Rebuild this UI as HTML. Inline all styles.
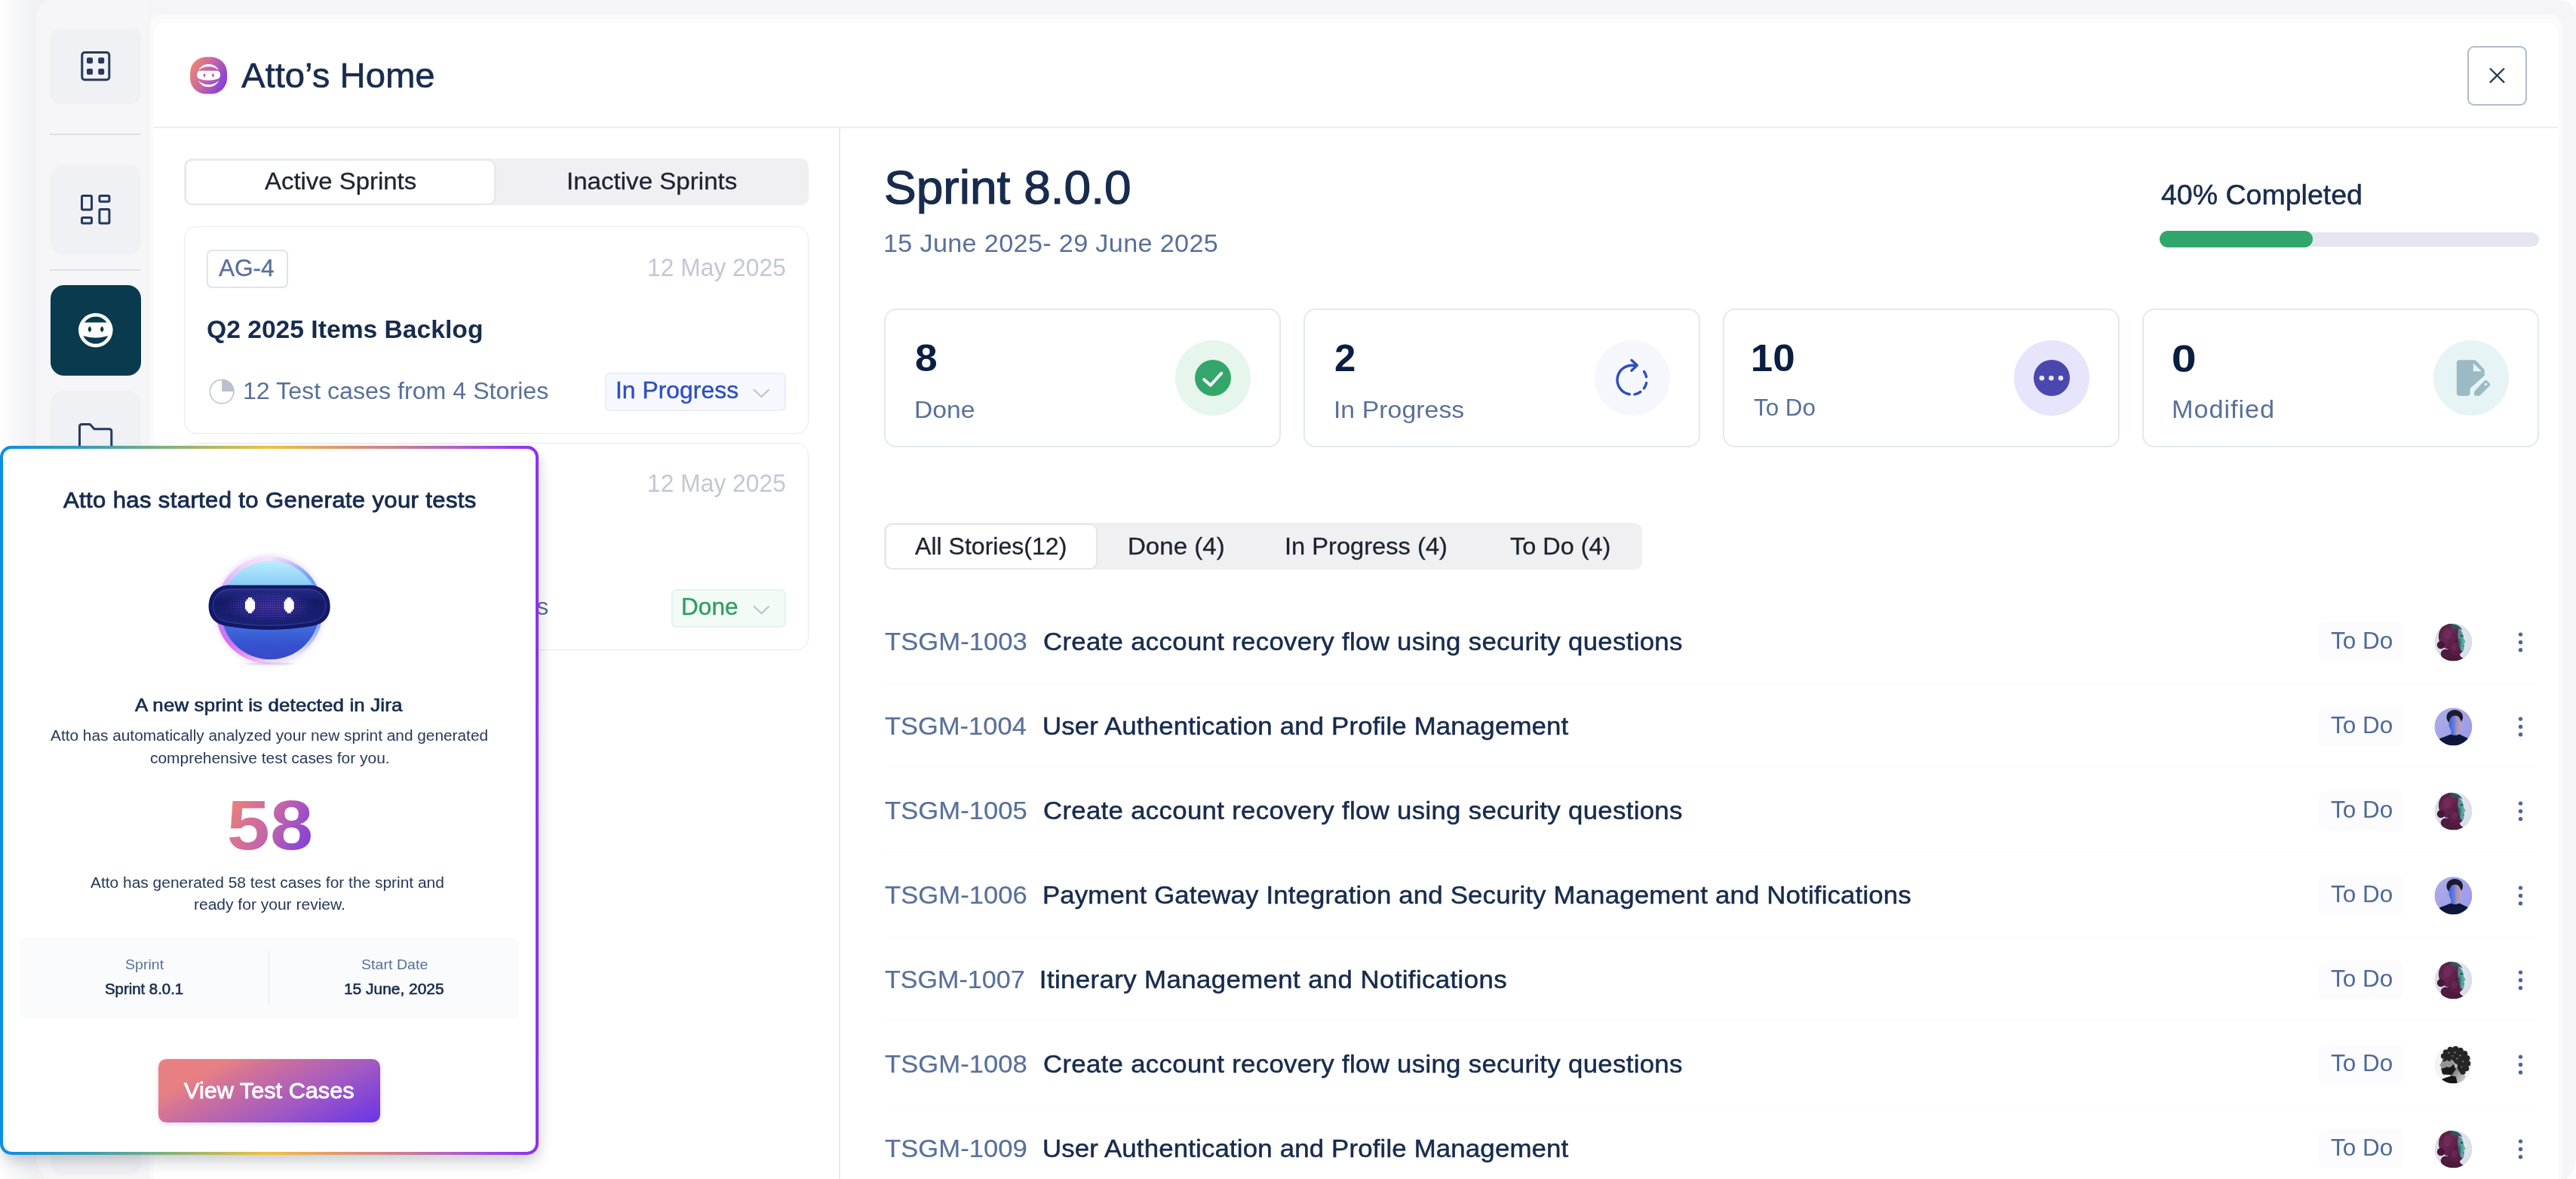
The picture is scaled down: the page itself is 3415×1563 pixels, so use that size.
<!DOCTYPE html>
<html lang="en">
<head>
<meta charset="utf-8">
<title>Atto's Home</title>
<style>
*{box-sizing:border-box;margin:0;padding:0}
html,body{width:3415px;height:1563px;overflow:hidden}
body{position:relative;background:#fcfcfd;font-family:"Liberation Sans",sans-serif}
.abs,.t,.box{position:absolute}
.t{white-space:pre;line-height:1;font-weight:normal}
#leftfade{left:0;top:0;width:70px;height:1563px;background:linear-gradient(to right,#ffffff 0px,#fafafc 14px,#f4f5f7 30px,#f0f1f4 48px,#f1f2f5 70px)}
#shell{left:48px;top:0;width:3367px;height:1574px;background:#f5f5f7;border-radius:22px 22px 40px 40px}
#sidebar{left:48px;top:0;width:150px;height:1574px;background:#f6f6f8;border-radius:22px 0 0 40px}
.sb{left:67px;width:120px;background:#f0f1f4;border-radius:18px}
.sep{left:66px;width:121px;height:2px;background:#dfe1e7}
#mainOuter{left:198px;top:19px;width:3198px;height:1600px;background:#fbfbfc;border-radius:16px}
#main{left:204px;top:30px;width:3186.5px;height:1600px;background:#fff;border-radius:13px}
#hdrline{left:204px;top:167.5px;width:3186.5px;height:2px;background:#eceef1}
#vline{left:1112px;top:169px;width:2px;height:1400px;background:#e7e9ef}
.card{border:2px solid #e4e8ef;border-radius:16px;background:#fff}
.tabs{background:#f0f0f3;border-radius:10px}
.tabon{background:#fff;border:2px solid #e5e6eb;border-radius:10px}
.badge{border-radius:7px}
.circ{border-radius:50%}
.rowsep{left:1173px;width:2188px;height:1.5px;background:#fbfbfd}
.todo{left:3074px;width:113px;height:52px;background:#fcfcfe;border-radius:8px}
#popup{left:0;top:591px;width:713.5px;height:940px;border-radius:15px;background:linear-gradient(to right,#0a8fe2 0%,#3f9fb0 18%,#8db474 33%,#f0c23f 50%,#e39a6b 62%,#cf7f92 74%,#a855d6 88%,#8b2ff5 100%);box-shadow:0 12px 22px -4px rgba(15,20,40,.19),5px 6px 14px rgba(15,20,40,.05)}
#popin{left:3.8px;top:3.8px;width:705.9px;height:932.4px;border-radius:11.5px;background:#fff}
#info{left:26px;top:1242.5px;width:662px;height:107.5px;background:#fafbfc;border-radius:6px}
#infodiv{left:355.5px;top:1261px;width:1.5px;height:72px;background:#e3e6ec}
#btn{left:210px;top:1404px;width:294px;height:84px;border-radius:10.5px;background:linear-gradient(152deg,#e98082 0%,#e78083 21%,#cf719a 35%,#b865b0 50%,#a259c2 65%,#8547d6 82%,#6a34e6 100%);box-shadow:0 2px 6px rgba(80,40,140,.2)}
</style>
</head>
<body>
<div class="abs" id="leftfade"></div>
<div class="abs" id="shell"></div>
<div class="abs" id="sidebar"></div>
<!-- sidebar buttons -->
<div class="abs sb" style="top:38px;height:100px;border-radius:14px"></div>
<div class="abs sep" style="top:176.5px"></div>
<div class="abs sb" style="top:218px;height:120px"></div>
<div class="abs sep" style="top:357px"></div>
<div class="abs sb" style="top:378px;height:120px;background:#0a3a4d"></div>
<div class="abs sb" style="top:518px;height:120px"></div>
<div class="abs sb" style="top:1438px;height:120px"></div>

<div class="abs" id="mainOuter"></div>
<div class="abs" id="main"></div>
<div class="abs" id="hdrline"></div>
<div class="abs" id="vline"></div>

<!-- close button -->
<div class="abs" style="left:3271px;top:60.5px;width:79px;height:79px;border:2.5px solid #b4bac8;border-radius:9px;background:#fff"></div>

<!-- left tabs -->
<div class="abs tabs" style="left:244px;top:210px;width:828px;height:62px"></div>
<div class="abs tabon" style="left:244.5px;top:210.5px;width:412px;height:61px"></div>

<!-- sprint cards -->
<div class="abs card" style="left:244px;top:300px;width:828px;height:275px;border:1.6px solid #e6e9ef"></div>
<div class="abs card" style="left:244px;top:587px;width:828px;height:275px;border:1.6px solid #e6e9ef"></div>
<div class="abs badge" style="left:274px;top:330.5px;width:108px;height:51px;border:2px solid #dfe3ec"></div>
<div class="abs badge" style="left:802px;top:493.5px;width:239.5px;height:51px;background:#f6f8fe;border:2.2px solid #e9edfb"></div>
<div class="abs badge" style="left:889.5px;top:781px;width:152px;height:51px;background:#f3fbf6;border:2.2px solid #e3f5ea"></div>

<!-- progress -->
<div class="abs" style="left:2862.5px;top:307.5px;width:503px;height:19.5px;border-radius:10px;background:#e3e6ef"></div>
<div class="abs" style="left:2862.5px;top:306.3px;width:203px;height:21.4px;border-radius:11px;background:#30a66b"></div>

<!-- stat cards -->
<div class="abs card" style="left:1172px;top:409px;width:526px;height:184px"></div>
<div class="abs card" style="left:1728px;top:409px;width:526px;height:184px"></div>
<div class="abs card" style="left:2284px;top:409px;width:525.5px;height:184px"></div>
<div class="abs card" style="left:2839.5px;top:409px;width:526px;height:184px"></div>
<div class="abs circ" style="left:1558px;top:451px;width:100px;height:100px;background:#e6f6ec"></div>
<div class="abs circ" style="left:1584px;top:477px;width:48px;height:48px;background:#34a66c"></div>
<div class="abs circ" style="left:2113.8px;top:451px;width:100px;height:100px;background:#f5f7fd"></div>
<div class="abs circ" style="left:2669.5px;top:451px;width:100px;height:100px;background:#e6e5fb"></div>
<div class="abs circ" style="left:2695.5px;top:477px;width:48px;height:48px;background:#4a48ae"></div>
<div class="abs circ" style="left:3225.5px;top:451px;width:100px;height:100px;background:#e6f4f6"></div>

<!-- story tabs -->
<div class="abs tabs" style="left:1172px;top:693px;width:1004.5px;height:62px"></div>
<div class="abs tabon" style="left:1172.5px;top:693.5px;width:282.5px;height:61px"></div>

<!-- rows -->
<div class="abs rowsep" style="top:904.7px"></div>
<div class="abs rowsep" style="top:1016.7px"></div>
<div class="abs rowsep" style="top:1128.7px"></div>
<div class="abs rowsep" style="top:1240.7px"></div>
<div class="abs rowsep" style="top:1352.7px"></div>
<div class="abs rowsep" style="top:1464.7px"></div>
<div class="abs todo" style="top:824.8px"></div>
<div class="abs todo" style="top:936.8px"></div>
<div class="abs todo" style="top:1048.8px"></div>
<div class="abs todo" style="top:1160.8px"></div>
<div class="abs todo" style="top:1272.8px"></div>
<div class="abs todo" style="top:1384.8px"></div>
<div class="abs todo" style="top:1496.8px"></div>
<svg class="abs" style="left:0;top:0;overflow:visible" width="3415" height="1563" viewBox="0 0 3415 1563" fill="none">
<defs>
<clipPath id="avc"><circle cx="25" cy="25" r="25"/></clipPath>
<filter id="avb" x="-10%" y="-10%" width="120%" height="120%"><feGaussianBlur stdDeviation="0.7"/></filter><filter id="avb2" x="-10%" y="-10%" width="120%" height="120%"><feGaussianBlur stdDeviation="0.9"/></filter>
<radialGradient id="avAbg" cx="0.5" cy="0.45" r="0.6"><stop offset="0" stop-color="#eceef3"/><stop offset="1" stop-color="#d5d9e3"/></radialGradient>
<linearGradient id="avAh" x1="0" y1="0" x2="1" y2="1"><stop offset="0" stop-color="#4c1e3e"/><stop offset="0.45" stop-color="#6b2852"/><stop offset="1" stop-color="#3f1633"/></linearGradient>
<linearGradient id="avAf" x1="0" y1="0" x2="1" y2="0"><stop offset="0" stop-color="#54717f"/><stop offset="0.5" stop-color="#4fa39b"/><stop offset="1" stop-color="#69b9ad"/></linearGradient>
<linearGradient id="avBbg" x1="0" y1="0" x2="1" y2="1"><stop offset="0" stop-color="#b0aee6"/><stop offset="1" stop-color="#9596ec"/></linearGradient>
<linearGradient id="avBf" x1="0" y1="0" x2="1" y2="0"><stop offset="0" stop-color="#4166dd"/><stop offset="0.38" stop-color="#5b7be2"/><stop offset="0.62" stop-color="#a88fb8"/><stop offset="1" stop-color="#bfa5bd"/></linearGradient>
<linearGradient id="avCn" x1="0" y1="0" x2="1" y2="1"><stop offset="0" stop-color="#5a5a5a"/><stop offset="0.55" stop-color="#a9a9a9"/><stop offset="1" stop-color="#dcdcdc"/></linearGradient>
<g id="avA" clip-path="url(#avc)">
<rect width="50" height="50" fill="url(#avAbg)"/>
<g filter="url(#avb)">
<path d="M13,36 L33,30 L38,36.5 L33.2,41.5 L35,44.5 L38.5,46.5 L30,51 L10,50 Z" fill="#4a1a3b"/>
<ellipse cx="20" cy="17.5" rx="14.6" ry="17" fill="url(#avAh)"/>
<path d="M21,1 C28,0 34.5,3.5 37,9.5 C32.5,7 27,6 22.5,7.5 Z" fill="#2f525d"/>
<path d="M31.5,7.5 C35.5,9 37.6,12.5 38.3,16.5 L38.8,20 L41.3,24.6 L39.2,26.6 L39.8,29.5 L39,31 L39.3,34 L37.8,36.6 L33,36.8 C31,31 32,23 30.5,15 Z" fill="url(#avAf)"/>
<path d="M18,30 C24,30 30,26 31.5,21 C32.5,28 33.5,33 35.5,37.2 L30,44 L20,40 Z" fill="#591f47"/>
<circle cx="8.6" cy="28.7" r="5.2" fill="#47193a"/>
<circle cx="14.5" cy="40.5" r="6.2" fill="#4f1c3f"/>
<ellipse cx="17" cy="14" rx="5.5" ry="7.5" fill="#7d2e60" opacity="0.5"/>
<ellipse cx="26" cy="31" rx="4.5" ry="5.5" fill="#7d2e60" opacity="0.45"/>
<ellipse cx="36" cy="16.8" rx="1.9" ry="1.1" fill="#21434b"/>
<ellipse cx="33.4" cy="26" rx="1.8" ry="6" fill="#2c5a64" opacity="0.65"/>
<path d="M37,30.2 L39.6,30.6" stroke="#2c5a64" stroke-width="0.8"/>
</g>
</g>
<g id="avB" clip-path="url(#avc)">
<rect width="50" height="50" fill="url(#avBbg)"/>
<g filter="url(#avb)">
<ellipse cx="26.8" cy="12.5" rx="10.8" ry="9.8" fill="#1d1a30"/>
<rect x="22" y="28" width="10.5" height="10" fill="url(#avBf)"/>
<ellipse cx="27.3" cy="21.5" rx="8.3" ry="11.2" fill="url(#avBf)"/>
<path d="M17.8,14.5 C19,7.5 24,5.5 27.5,5.8 C32,6 36,9 36.2,15 C34.5,11.5 31,9.8 27,10 C23,10.2 19.5,11.5 17.8,14.5 Z" fill="#1d1a30"/>
<path d="M5,42 C10,39 17,37.5 21.5,35.2 C25,37 29.5,37 33,35 C37,37.5 42,39 46,41.5 L46,52 L5,52 Z" fill="#10193c"/>
</g>
</g>
<g id="avC" clip-path="url(#avc)">
<rect width="50" height="50" fill="#f3f3f4"/>
<g filter="url(#avb)">
<path d="M23,26 L33,30 L41.5,41 L37,47.5 L28,51 L21,40 Z" fill="url(#avCn)"/>
<path d="M12.5,15.5 L10.3,19.6 L6.7,26.2 L8.9,28 L8.3,30.6 L10.4,35.2 L22,37 L29,27 L22,17 Z" fill="#949494"/>
<path d="M11.2,18.2 L15,19.2 L14,21.2 L10.5,20.4 Z" fill="#2a2a2a"/>
<path d="M8.9,30.4 C11,30.2 13.5,29.8 16,28 C19,29.8 22.5,28.5 25,24.5 L28.5,31 L23,38.8 L11.5,38.3 L9.8,35.5 C10,34 9.8,32.5 8.9,30.4 Z" fill="#1e1e1e"/>
<path d="M9.2,44.8 C15,42.2 20,41.3 23,39.8 L28.5,41.2 L30.5,50.5 L14,50.5 Z" fill="#191919"/>
<g fill="#252525">
<path d="M11.5,16.5 C11,10 16,3.5 25,3 C35,2.5 43,9 44,19 C44.8,27 41,34 35.5,36.2 C32.5,35 30.5,31 29.2,27 C27.5,23.5 25.5,20.5 22.5,18.2 C19,16.5 15,16 11.5,16.5 Z"/>
<circle cx="12" cy="13.8" r="3.6"/><circle cx="15.2" cy="8.8" r="3.8"/><circle cx="21" cy="5.2" r="3.8"/><circle cx="28" cy="4.2" r="3.8"/><circle cx="34.5" cy="6.2" r="3.8"/>
<circle cx="40" cy="10.5" r="3.9"/><circle cx="43.2" cy="16.5" r="3.9"/><circle cx="44" cy="23.5" r="3.9"/><circle cx="42" cy="30" r="3.9"/><circle cx="37.5" cy="34.6" r="3.7"/>
<circle cx="15" cy="17.2" r="2.6"/><circle cx="19.5" cy="18.3" r="2.4"/>
</g>
<ellipse cx="28.6" cy="26.8" rx="1.9" ry="2.9" fill="#b8b8b8"/>
<g fill="#707070"><circle cx="19" cy="9.5" r="1.2"/><circle cx="27" cy="9" r="1.3"/><circle cx="34" cy="13" r="1.3"/><circle cx="38" cy="21" r="1.2"/><circle cx="30" cy="17" r="1.2"/><circle cx="24" cy="13.5" r="1.1"/><circle cx="36" cy="28" r="1.1"/></g>
</g>
</g>
</defs>
<use href="#avA" x="3227.4" y="826.3"/>
<use href="#avB" x="3227.4" y="938.3"/>
<use href="#avA" x="3227.4" y="1050.3"/>
<use href="#avB" x="3227.4" y="1162.3"/>
<use href="#avA" x="3227.4" y="1274.3"/>
<use href="#avC" x="3227.4" y="1386.3"/>
<use href="#avA" x="3227.4" y="1498.3"/>
</svg>

<svg class="abs" style="left:0;top:0;overflow:visible" width="3415" height="1563" viewBox="0 0 3415 1563" fill="none">
<defs>
<linearGradient id="lg1" x1="0" y1="0.25" x2="1" y2="0.75"><stop offset="0" stop-color="#ee8673"/><stop offset="0.45" stop-color="#c765a6"/><stop offset="1" stop-color="#7d3be2"/></linearGradient>
<g id="ninja">
<circle cx="0" cy="0" r="20.35" stroke="#fff" stroke-width="4.7"/>
<path d="M-22.5,-1.6 C-22.5,-7.5 -19,-10.3 -14,-10.3 L14,-10.3 C19,-10.3 22.6,-7.5 22.6,-1.6 C22.6,4.3 19.5,7.4 14.5,8 Q0,12.3 -14.5,8 C-19.5,7.4 -22.5,4.3 -22.5,-1.6 Z" fill="#fff"/>
</g>
</defs>
<!-- sidebar icon 1 -->
<rect x="108.8" y="69.5" width="36" height="36.3" rx="3.5" stroke="#263a5e" stroke-width="3"/>
<rect x="115" y="76.2" width="8" height="8" rx="2" fill="#263a5e"/><rect x="130.2" y="76.2" width="8" height="8" rx="2" fill="#263a5e"/>
<rect x="115" y="91" width="8" height="8" rx="2" fill="#263a5e"/><rect x="130.2" y="91" width="8" height="8" rx="2" fill="#263a5e"/>
<!-- sidebar icon 2 -->
<g stroke="#263a5e" stroke-width="3">
<rect x="108.5" y="259.5" width="13" height="18.4" rx="1.5"/>
<rect x="131.9" y="259.5" width="13" height="7.7" rx="1.5"/>
<rect x="108.5" y="288.4" width="13" height="7.5" rx="1.5"/>
<rect x="131.9" y="277.5" width="13" height="18.4" rx="1.5"/>
</g>
<!-- sidebar ninja -->
<g transform="translate(126.8,437.7)">
<use href="#ninja"/>
<path d="M-7.9,-5.1 Q-3.3,-1.15 -7.9,2.8 Q-12.5,-1.15 -7.9,-5.1 Z M8.4,-5.1 Q13,-1.15 8.4,2.8 Q3.8,-1.15 8.4,-5.1 Z" fill="#0a3a4d"/>
</g>
<!-- folder -->
<path d="M105.5,596 V565.5 Q105.5,562.5 108.5,562.5 H119.3 L125,568.7 H144.8 Q147.8,568.7 147.8,571.7 V596" stroke="#263a5e" stroke-width="3" stroke-linejoin="round"/>
<!-- header logo -->
<rect x="252" y="75.6" width="49" height="49" rx="21" fill="url(#lg1)"/>
<g>
<path d="M263.06,93.2 A15.2,15.2 0 0 1 289.94,93.2 A20.6,20.6 0 0 0 263.06,93.2 Z" fill="#fff"/>
<path d="M261.1,99.6 C261.1,95.4 263,93.7 266,93.7 H287.1 C290.1,93.7 292,95.4 292,99.6 C292,102.8 290.5,104.5 287.5,104.9 Q276.5,107.9 265.6,104.9 C262.6,104.5 261.1,102.8 261.1,99.6 Z" fill="#fff"/>
<path d="M262.7,106.4 A15.2,15.2 0 0 0 290.3,106.4 A19.3,19.3 0 0 1 262.7,106.4 Z" fill="#fff"/>
<path d="M271,97.2 Q273.9,99.9 271,102.6 Q268.1,99.9 271,97.2 Z M282.4,97.2 Q285.3,99.9 282.4,102.6 Q279.5,99.9 282.4,97.2 Z" fill="#b85cb2"/>
</g>
<!-- close X -->
<path d="M3301.5,91.3 L3319.3,108.9 M3319.3,91.3 L3301.5,108.9" stroke="#253858" stroke-width="2.2" stroke-linecap="round"/>
<!-- pie icons -->
<circle cx="294.1" cy="519.1" r="15.8" stroke="#c3c6d0" stroke-width="1.7"/>
<path d="M294.1,519.1 V503.3 A15.8,15.8 0 0 1 309.9,519.1 Z" fill="#babfcc"/>
<!-- chevrons -->
<path d="M999.1,516.2 L1009.4,526 L1019.7,516.2" stroke="#c0c3cc" stroke-width="2.2" stroke-linecap="butt" stroke-linejoin="miter"/>
<path d="M999.1,803.5 L1009.4,813.3 L1019.7,803.5" stroke="#c0c3cc" stroke-width="2.2" stroke-linecap="butt" stroke-linejoin="miter"/>
<!-- check -->
<path d="M1596.3,503.2 L1604.8,510.8 L1619.2,494.8" stroke="#f4fbf6" stroke-width="4" stroke-linecap="round" stroke-linejoin="round"/>
<!-- rotate -->
<g stroke="#2d4fb8" stroke-width="3.4" stroke-linecap="round" stroke-linejoin="round" transform="translate(2123,461)">
<path d="M45.7,24.1 A19.3,19.3 0 1 0 37.3,61.7"/>
<path d="M40,16.6 L47.3,23.2 L40,30.2"/>
<path d="M43.9,61.8 A19.3,19.3 0 0 0 51.8,58.5"/>
<path d="M56.5,53.8 A19.3,19.3 0 0 0 59.6,46.7"/>
<path d="M59.6,38.7 A19.3,19.3 0 0 0 56.5,31.6"/>
</g>
<!-- todo dots -->
<circle cx="2706.8" cy="501.3" r="3.3" fill="#ecebfb"/><circle cx="2719.3" cy="501.3" r="3.3" fill="#ecebfb"/><circle cx="2731.9" cy="501.3" r="3.3" fill="#ecebfb"/>
<!-- doc pencil -->
<g transform="translate(3235,461)" fill="#9bbac4">
<path d="M25.3,16.3 H45.6 Q46.6,16.3 47.4,17.1 L57.9,28.2 Q58.7,29 58.7,30 V37 L40.6,53 Q39.6,53.9 39.6,55.2 V60.3 Q39.6,63.8 36.1,63.8 H25.3 Q21.8,63.8 21.8,60.3 V19.8 Q21.8,16.3 25.3,16.3 Z M43.8,20.4 V31.2 H55 Z" fill-rule="evenodd"/>
<path d="M45.1,57.9 L58.6,43.9 Q60.4,42.1 62.3,43.9 L65.3,47 Q67,48.9 65.3,50.7 L52.6,63.2 Q52,63.8 51.2,63.8 H46.6 Q45.1,63.8 45.1,62.3 Z M60.4,46.2 L62.7,48.5 L60.4,50.8 L58.1,48.5 Z" fill-rule="evenodd"/>
</g>
<!-- kebabs -->
<g fill="#4b6797">
<circle cx="3341.5" cy="841.1" r="2.7"/><circle cx="3341.5" cy="851.5" r="2.7"/><circle cx="3341.5" cy="861.8" r="2.7"/>
<circle cx="3341.5" cy="953.1" r="2.7"/><circle cx="3341.5" cy="963.5" r="2.7"/><circle cx="3341.5" cy="973.8" r="2.7"/>
<circle cx="3341.5" cy="1065.1" r="2.7"/><circle cx="3341.5" cy="1075.5" r="2.7"/><circle cx="3341.5" cy="1085.8" r="2.7"/>
<circle cx="3341.5" cy="1177.1" r="2.7"/><circle cx="3341.5" cy="1187.5" r="2.7"/><circle cx="3341.5" cy="1197.8" r="2.7"/>
<circle cx="3341.5" cy="1289.1" r="2.7"/><circle cx="3341.5" cy="1299.5" r="2.7"/><circle cx="3341.5" cy="1309.8" r="2.7"/>
<circle cx="3341.5" cy="1401.1" r="2.7"/><circle cx="3341.5" cy="1411.5" r="2.7"/><circle cx="3341.5" cy="1421.8" r="2.7"/>
<circle cx="3341.5" cy="1513.1" r="2.7"/><circle cx="3341.5" cy="1523.5" r="2.7"/><circle cx="3341.5" cy="1533.8" r="2.7"/>
</g>
</svg>

<div id="bgtext">
<div class="t" style="left:320.0px;top:76.4px;font-size:47.0px;letter-spacing:0.00px;color:#172b4d;-webkit-text-stroke:0.6px #172b4d;transform:scaleX(1.006);transform-origin:0.0px 50%;">Atto’s Home</div>
<div class="t" style="left:351.0px;top:224.0px;font-size:32.0px;letter-spacing:-0.00px;color:#1d2330;-webkit-text-stroke:0.3px #1d2330;transform:scaleX(1.028);transform-origin:0.0px 50%;">Active Sprints</div>
<div class="t" style="left:750.7px;top:223.9px;font-size:32.0px;letter-spacing:0.00px;color:#1d2330;-webkit-text-stroke:0.3px #1d2330;transform:scaleX(1.035);transform-origin:2.0px 50%;">Inactive Sprints</div>
<div class="t" style="left:290.1px;top:339.5px;font-size:30.5px;letter-spacing:0.00px;color:#58709a;-webkit-text-stroke:0.3px #58709a;transform:scaleX(1.033);transform-origin:0.0px 50%;">AG-4</div>
<div class="t" style="left:857.5px;top:338.8px;font-size:32.5px;letter-spacing:0.00px;color:#c4c8d4;transform:scaleX(0.978);transform-origin:2.0px 50%;">12 May 2025</div>
<div class="t" style="left:273.7px;top:420.4px;font-size:33.5px;letter-spacing:0.00px;color:#172b4d;font-weight:bold;transform:scaleX(1.004);transform-origin:1.0px 50%;">Q2 2025 Items Backlog</div>
<div class="t" style="left:322.4px;top:502.6px;font-size:31.0px;letter-spacing:0.00px;color:#58709a;transform:scaleX(1.038);transform-origin:2.0px 50%;">12 Test cases from 4 Stories</div>
<div class="t" style="left:815.6px;top:501.8px;font-size:31.5px;letter-spacing:0.00px;color:#2f4fbf;-webkit-text-stroke:0.4px #2f4fbf;transform:scaleX(1.013);transform-origin:2.0px 50%;">In Progress</div>
<div class="t" style="left:857.5px;top:624.8px;font-size:32.5px;letter-spacing:0.00px;color:#c4c8d4;transform:scaleX(0.978);transform-origin:2.0px 50%;">12 May 2025</div>
<div class="t" style="left:322.4px;top:789.2px;font-size:31.0px;letter-spacing:0.00px;color:#58709a;transform:scaleX(1.038);transform-origin:2.0px 50%;">12 Test cases from 4 Stories</div>
<div class="t" style="left:903.0px;top:788.8px;font-size:31.5px;letter-spacing:0.00px;color:#2f9e62;-webkit-text-stroke:0.4px #2f9e62;transform:scaleX(1.003);transform-origin:2.0px 50%;">Done</div>
<div class="t" style="left:1171.8px;top:217.3px;font-size:63.0px;letter-spacing:0.00px;color:#172b4d;-webkit-text-stroke:1.2px #172b4d;transform:scaleX(1.017);transform-origin:2.0px 50%;">Sprint 8.0.0</div>
<div class="t" style="left:1171.0px;top:307.0px;font-size:32.5px;letter-spacing:0.28px;color:#58709a;transform:scaleX(1.055);transform-origin:2.0px 50%;">15 June 2025- 29 June 2025</div>
<div class="t" style="left:2865.3px;top:240.6px;font-size:36.5px;letter-spacing:0.00px;color:#172b4d;-webkit-text-stroke:0.5px #172b4d;transform:scaleX(1.028);transform-origin:0.0px 50%;">40% Completed</div>
<div class="t" style="left:1213.3px;top:450.1px;font-size:50.5px;letter-spacing:0.00px;color:#091e42;font-weight:bold;transform:scaleX(1.058);transform-origin:1.0px 50%;">8</div>
<div class="t" style="left:1769.3px;top:450.1px;font-size:50.5px;letter-spacing:0.00px;color:#091e42;font-weight:bold;transform:scaleX(1.008);transform-origin:1.0px 50%;">2</div>
<div class="t" style="left:2321.2px;top:450.1px;font-size:50.5px;letter-spacing:0.00px;color:#091e42;font-weight:bold;transform:scaleX(1.048);transform-origin:3.0px 50%;">10</div>
<div class="t" style="left:2879.4px;top:450.7px;font-size:50.5px;letter-spacing:0.00px;color:#091e42;font-weight:bold;transform:scaleX(1.172);transform-origin:2.0px 50%;">0</div>
<div class="t" style="left:1212.0px;top:527.4px;font-size:32.0px;letter-spacing:0.00px;color:#58709a;transform:scaleX(1.054);transform-origin:2.0px 50%;">Done</div>
<div class="t" style="left:1767.7px;top:527.4px;font-size:32.0px;letter-spacing:0.07px;color:#58709a;transform:scaleX(1.055);transform-origin:2.0px 50%;">In Progress</div>
<div class="t" style="left:2324.7px;top:524.8px;font-size:31.5px;letter-spacing:0.00px;color:#58709a;transform:scaleX(0.994);transform-origin:0.0px 50%;">To Do</div>
<div class="t" style="left:2879.4px;top:527.2px;font-size:32.5px;letter-spacing:0.89px;color:#58709a;transform:scaleX(1.055);transform-origin:2.0px 50%;">Modified</div>
<div class="t" style="left:1213.4px;top:708.5px;font-size:31.5px;letter-spacing:-0.00px;color:#1d2330;-webkit-text-stroke:0.3px #1d2330;transform:scaleX(1.018);transform-origin:0.0px 50%;">All Stories(12)</div>
<div class="t" style="left:1494.5px;top:708.5px;font-size:31.5px;letter-spacing:0.00px;color:#1d2330;-webkit-text-stroke:0.3px #1d2330;transform:scaleX(1.051);transform-origin:2.0px 50%;">Done (4)</div>
<div class="t" style="left:1702.5px;top:708.5px;font-size:31.5px;letter-spacing:0.00px;color:#1d2330;-webkit-text-stroke:0.3px #1d2330;transform:scaleX(1.037);transform-origin:2.0px 50%;">In Progress (4)</div>
<div class="t" style="left:2001.7px;top:708.5px;font-size:31.5px;letter-spacing:0.00px;color:#1d2330;-webkit-text-stroke:0.3px #1d2330;transform:scaleX(1.030);transform-origin:0.0px 50%;">To Do (4)</div>
<div class="t" style="left:1173.3px;top:834.1px;font-size:33.0px;letter-spacing:0.00px;color:#58709a;-webkit-text-stroke:0.2px #58709a;transform:scaleX(1.051);transform-origin:0.0px 50%;">TSGM-1003</div>
<div class="t" style="left:1383.2px;top:834.1px;font-size:33.0px;letter-spacing:0.28px;color:#172b4d;-webkit-text-stroke:0.5px #172b4d;transform:scaleX(1.055);transform-origin:1.0px 50%;">Create account recovery flow using security questions</div>
<div class="t" style="left:3089.7px;top:834.0px;font-size:31.0px;letter-spacing:0.00px;color:#506a97;transform:scaleX(1.015);transform-origin:0.0px 50%;">To Do</div>
<div class="t" style="left:1173.3px;top:946.1px;font-size:33.0px;letter-spacing:0.00px;color:#58709a;-webkit-text-stroke:0.2px #58709a;transform:scaleX(1.045);transform-origin:0.0px 50%;">TSGM-1004</div>
<div class="t" style="left:1382.2px;top:946.1px;font-size:33.0px;letter-spacing:0.15px;color:#172b4d;-webkit-text-stroke:0.5px #172b4d;transform:scaleX(1.055);transform-origin:2.0px 50%;">User Authentication and Profile Management</div>
<div class="t" style="left:3089.7px;top:946.0px;font-size:31.0px;letter-spacing:0.00px;color:#506a97;transform:scaleX(1.015);transform-origin:0.0px 50%;">To Do</div>
<div class="t" style="left:1173.3px;top:1058.0px;font-size:33.0px;letter-spacing:0.00px;color:#58709a;-webkit-text-stroke:0.2px #58709a;transform:scaleX(1.051);transform-origin:0.0px 50%;">TSGM-1005</div>
<div class="t" style="left:1383.2px;top:1058.0px;font-size:33.0px;letter-spacing:0.28px;color:#172b4d;-webkit-text-stroke:0.5px #172b4d;transform:scaleX(1.055);transform-origin:1.0px 50%;">Create account recovery flow using security questions</div>
<div class="t" style="left:3089.7px;top:1058.0px;font-size:31.0px;letter-spacing:0.00px;color:#506a97;transform:scaleX(1.015);transform-origin:0.0px 50%;">To Do</div>
<div class="t" style="left:1173.3px;top:1170.0px;font-size:33.0px;letter-spacing:0.00px;color:#58709a;-webkit-text-stroke:0.2px #58709a;transform:scaleX(1.051);transform-origin:0.0px 50%;">TSGM-1006</div>
<div class="t" style="left:1382.2px;top:1170.0px;font-size:33.0px;letter-spacing:0.14px;color:#172b4d;-webkit-text-stroke:0.5px #172b4d;transform:scaleX(1.055);transform-origin:2.0px 50%;">Payment Gateway Integration and Security Management and Notifications</div>
<div class="t" style="left:3089.7px;top:1170.0px;font-size:31.0px;letter-spacing:0.00px;color:#506a97;transform:scaleX(1.015);transform-origin:0.0px 50%;">To Do</div>
<div class="t" style="left:1173.3px;top:1282.0px;font-size:33.0px;letter-spacing:0.00px;color:#58709a;-webkit-text-stroke:0.2px #58709a;transform:scaleX(1.033);transform-origin:0.0px 50%;">TSGM-1007</div>
<div class="t" style="left:1377.5px;top:1282.0px;font-size:33.0px;letter-spacing:0.36px;color:#172b4d;-webkit-text-stroke:0.5px #172b4d;transform:scaleX(1.055);transform-origin:3.0px 50%;">Itinerary Management and Notifications</div>
<div class="t" style="left:3089.7px;top:1282.0px;font-size:31.0px;letter-spacing:0.00px;color:#506a97;transform:scaleX(1.015);transform-origin:0.0px 50%;">To Do</div>
<div class="t" style="left:1173.3px;top:1394.0px;font-size:33.0px;letter-spacing:0.00px;color:#58709a;-webkit-text-stroke:0.2px #58709a;transform:scaleX(1.051);transform-origin:0.0px 50%;">TSGM-1008</div>
<div class="t" style="left:1383.2px;top:1394.0px;font-size:33.0px;letter-spacing:0.28px;color:#172b4d;-webkit-text-stroke:0.5px #172b4d;transform:scaleX(1.055);transform-origin:1.0px 50%;">Create account recovery flow using security questions</div>
<div class="t" style="left:3089.7px;top:1394.0px;font-size:31.0px;letter-spacing:0.00px;color:#506a97;transform:scaleX(1.015);transform-origin:0.0px 50%;">To Do</div>
<div class="t" style="left:1173.3px;top:1506.0px;font-size:33.0px;letter-spacing:0.00px;color:#58709a;-webkit-text-stroke:0.2px #58709a;transform:scaleX(1.051);transform-origin:0.0px 50%;">TSGM-1009</div>
<div class="t" style="left:1382.2px;top:1506.0px;font-size:33.0px;letter-spacing:0.15px;color:#172b4d;-webkit-text-stroke:0.5px #172b4d;transform:scaleX(1.055);transform-origin:2.0px 50%;">User Authentication and Profile Management</div>
<div class="t" style="left:3089.7px;top:1506.0px;font-size:31.0px;letter-spacing:0.00px;color:#506a97;transform:scaleX(1.015);transform-origin:0.0px 50%;">To Do</div>
</div>
<div class="abs" id="popup"><div class="abs" id="popin"></div></div>
<div class="abs" id="info"></div>
<div class="abs" id="infodiv"></div>
<div class="abs" id="btn"></div>
<div class="abs" style="left:286px;top:737.5px;width:142px;height:142px;border-radius:50%;background:conic-gradient(from 0deg at 50% 50%,#f6e3fb 0deg,#c9c2fb 25deg,#6f9ff6 50deg,#6a9af5 95deg,#b9c0fa 125deg,#efe6fd 150deg,#f0dcfb 178deg,#e79cf5 205deg,#d46ef0 232deg,#c884f4 265deg,#d8b4f8 300deg,#f3d7fa 335deg,#f6e3fb 360deg);box-shadow:0 0 7px 2px rgba(200,170,245,.35)"></div>
<svg class="abs" style="left:256px;top:718px;overflow:visible" width="200" height="180" viewBox="0 0 200 180" fill="none">
<defs>
<linearGradient id="rb1" x1="0" y1="0" x2="0" y2="1"><stop offset="0" stop-color="#b9effc"/><stop offset="0.22" stop-color="#8fd0f7"/><stop offset="0.42" stop-color="#5f9ff0"/><stop offset="0.62" stop-color="#4374e0"/><stop offset="0.85" stop-color="#3552cf"/><stop offset="1" stop-color="#3a49c9"/></linearGradient>
<linearGradient id="rb3" x1="0" y1="0" x2="0" y2="1"><stop offset="0" stop-color="#232b86"/><stop offset="0.35" stop-color="#151a66"/><stop offset="1" stop-color="#1b2276"/></linearGradient>
<radialGradient id="rb4" cx="0.5" cy="0.5" r="0.5"><stop offset="0" stop-color="#4a2b9e" stop-opacity="0.7"/><stop offset="0.65" stop-color="#35238c" stop-opacity="0.35"/><stop offset="1" stop-color="#1a1d6c" stop-opacity="0"/></radialGradient>
<radialGradient id="rb5" cx="0.5" cy="0.5" r="0.5"><stop offset="0" stop-color="#fff" stop-opacity="1"/><stop offset="0.7" stop-color="#fff" stop-opacity="0.8"/><stop offset="1" stop-color="#fff" stop-opacity="0"/></radialGradient>
<filter id="rbblur1" x="-20%" y="-20%" width="140%" height="140%"><feGaussianBlur stdDeviation="0.8"/></filter>
<pattern id="dots" x="0.5" y="0.4" width="3.05" height="3.05" patternUnits="userSpaceOnUse"><circle cx="1.5" cy="1.5" r="0.85" fill="#5a52cc"/></pattern>
<mask id="dmask"><ellipse cx="101" cy="86" rx="62" ry="21" fill="url(#rb5)"/></mask>
</defs>
<circle cx="102.3" cy="91" r="65.3" fill="url(#rb1)"/>
<ellipse cx="101" cy="161.8" rx="34" ry="1.2" fill="#8a8aa0" opacity="0.35" filter="url(#rbblur1)"/>
<!-- visor -->
<path d="M20.6,86 C20.6,68 32,57.7 48,57.7 H154 C170,57.7 181.7,68 181.7,86 C181.7,101 172,110 156,112.3 Q101,121.5 46,112.3 C30,110 20.6,101 20.6,86 Z" fill="#131867"/>
<path d="M26,86 C26,71 36,62.5 50,62.5 H152 C166,62.5 176.3,71 176.3,86 C176.3,98 168,105.6 154,107.6 Q101,116 48,107.6 C34,105.6 26,98 26,86 Z" fill="url(#rb3)"/>
<ellipse cx="101" cy="86" rx="60" ry="20" fill="url(#rb4)"/>
<rect x="36" y="64" width="130" height="46" fill="url(#dots)" mask="url(#dmask)" opacity="0.8"/>
<path d="M26.6,86 C26.6,71.4 36.4,63.1 50,63.1 H152 C165.6,63.1 175.7,71.4 175.7,86 C175.7,97.6 167.6,105 154,107 Q101,115.4 48,107 C34.4,105 26.6,97.6 26.6,86 Z" stroke="#4854b8" stroke-width="1.1" opacity="0.55"/>
<!-- eyes -->
<path d="M73,74 h5 v2.4 h2.4 v2.8 h1.7 v10.6 h-1.7 v2.8 h-2.4 v2.4 h-5 v-2.4 h-2.4 v-2.8 h-1.7 v-10.6 h1.7 v-2.8 h2.4 Z" fill="#fff"/>
<path d="M124.6,74 h5 v2.4 h2.4 v2.8 h1.7 v10.6 h-1.7 v2.8 h-2.4 v2.4 h-5 v-2.4 h-2.4 v-2.8 h-1.7 v-10.6 h1.7 v-2.8 h2.4 Z" fill="#fff"/>
</svg>

<div id="poptext">
<div class="t" style="left:83.6px;top:648.3px;font-size:29.5px;letter-spacing:0.32px;color:#172b4d;-webkit-text-stroke:0.85px #172b4d;transform:scaleX(1.055);transform-origin:0.0px 50%;">Atto has started to Generate your tests</div>
<div class="t" style="left:178.8px;top:922.5px;font-size:24.5px;letter-spacing:0.16px;color:#172b4d;-webkit-text-stroke:0.7px #172b4d;transform:scaleX(1.055);transform-origin:0.0px 50%;">A new sprint is detected in Jira</div>
<div class="t" style="left:66.9px;top:965.4px;font-size:20.5px;letter-spacing:0.00px;color:#253858;transform:scaleX(1.016);transform-origin:0.0px 50%;">Atto has automatically analyzed your new sprint and generated</div>
<div class="t" style="left:199.0px;top:995.1px;font-size:20.5px;letter-spacing:0.00px;color:#253858;transform:scaleX(1.021);transform-origin:0.0px 50%;">comprehensive test cases for you.</div>
<div class="t" style="left:300.8px;top:1048.0px;font-size:93.0px;letter-spacing:0.00px;color:#c060a0;font-weight:bold;transform:scaleX(1.104);transform-origin:2.0px 50%;background:linear-gradient(115deg,#ec8079 8%,#c565a8 50%,#7c3ce0 95%);-webkit-background-clip:text;background-clip:text;-webkit-text-fill-color:transparent;color:transparent;">58</div>
<div class="t" style="left:119.7px;top:1159.5px;font-size:20.5px;letter-spacing:0.00px;color:#253858;transform:scaleX(1.021);transform-origin:0.0px 50%;">Atto has generated 58 test cases for the sprint and</div>
<div class="t" style="left:256.5px;top:1188.9px;font-size:20.5px;letter-spacing:0.00px;color:#253858;transform:scaleX(1.025);transform-origin:1.0px 50%;">ready for your review.</div>
<div class="t" style="left:165.5px;top:1269.9px;font-size:18.5px;letter-spacing:0.03px;color:#58709a;transform:scaleX(1.055);transform-origin:0.0px 50%;">Sprint</div>
<div class="t" style="left:139.3px;top:1301.2px;font-size:20.5px;letter-spacing:0.00px;color:#172b4d;-webkit-text-stroke:0.6px #172b4d;transform:scaleX(0.993);transform-origin:0.0px 50%;">Sprint 8.0.1</div>
<div class="t" style="left:478.7px;top:1269.9px;font-size:18.5px;letter-spacing:0.05px;color:#58709a;transform:scaleX(1.055);transform-origin:0.0px 50%;">Start Date</div>
<div class="t" style="left:456.0px;top:1301.2px;font-size:20.5px;letter-spacing:0.00px;color:#172b4d;-webkit-text-stroke:0.6px #172b4d;transform:scaleX(1.021);transform-origin:1.0px 50%;">15 June, 2025</div>
<div class="t" style="left:243.7px;top:1432.2px;font-size:29.0px;letter-spacing:0.03px;color:#ffffff;-webkit-text-stroke:0.8px #ffffff;transform:scaleX(1.055);transform-origin:0.0px 50%;">View Test Cases</div>
</div>
</body>
</html>
